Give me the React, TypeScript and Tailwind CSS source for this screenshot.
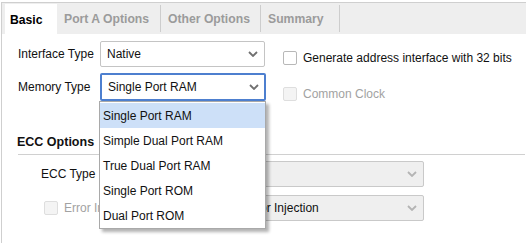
import React from 'react';

const memoryTypes = [
  'Single Port RAM',
  'Simple Dual Port RAM',
  'True Dual Port RAM',
  'Single Port ROM',
  'Dual Port ROM',
];

const tabs = [
  { label: 'Port A Options', width: 'w-[104px]' },
  { label: 'Other Options', width: 'w-[100px]' },
  { label: 'Summary', width: 'w-[79px]' },
];

function Chevron({ muted }: { muted?: boolean }) {
  return (
    <svg width="10" height="6" viewBox="0 0 10 6" className="shrink-0">
      <path
        d="M1 1 L5 5 L9 1"
        fill="none"
        stroke={muted ? '#b4b4b4' : '#707070'}
        strokeWidth="1.8"
      />
    </svg>
  );
}

function Checkbox({ disabled }: { disabled?: boolean }) {
  return (
    <span
      className={
        disabled
          ? 'w-[14px] h-[14px] rounded-[2px] border border-[#dedede] bg-[#f4f4f4] shrink-0'
          : 'w-[14px] h-[14px] rounded-[2px] border border-[#b8b8b8] bg-white shrink-0'
      }
    />
  );
}

export default function App() {
  return (
    <div
      className="relative w-[526px] h-[243px] overflow-hidden bg-white text-[12px] text-[#111]"
      style={{ fontFamily: '"Liberation Sans", Arial, sans-serif' }}
    >
      <div className="mt-[2px] ml-[1px] h-[241px] border-l border-t border-[#cfcfcf] flex flex-col">
        {/* Tab bar */}
        <div className="h-[31px] bg-[#eeeeee] flex items-stretch pl-[3px] font-bold text-[12.2px]">
          <div className="mt-[1px] w-[52px] bg-white pl-[5px] pt-[7px] text-black">Basic</div>
          {tabs.map((t) => (
            <div key={t.label} className={`${t.width} flex items-center justify-between`}>
              <span className="pl-[7px] pt-[1px] text-[#9b9b9b] whitespace-nowrap">{t.label}</span>
              <span className="w-px h-[27px] bg-[#cdcdcd]" />
            </div>
          ))}
        </div>

        {/* Content */}
        <div className="pt-[7px] pl-[16px] flex flex-col">
          <div className="flex items-start h-[26px]">
            <span className="w-[82px] leading-[26px]">Interface Type</span>
            <div className="w-[165px] h-[26px] border border-[#c4c4c4] rounded-[2px] flex items-center justify-between pl-[6px] pr-[6px]">
              <span>Native</span>
              <Chevron />
            </div>
            <div className="ml-[18px] mt-[8px] flex items-center gap-[6px]">
              <Checkbox />
              <span>Generate address interface with 32 bits</span>
            </div>
          </div>

          <div className="flex items-start h-[28px] mt-[6px]">
            <span className="w-[82px] leading-[28px]">Memory Type</span>
            <div className="w-[166px] h-[28px] border-2 border-[#4d7fcf] rounded-[2px] flex items-center justify-between pl-[6px] pr-[5px]">
              <span>Single Port RAM</span>
              <Chevron />
            </div>
            <div className="ml-[17px] mt-[12px] flex items-center gap-[6px] text-[#a2a2a2]">
              <Checkbox disabled />
              <span>Common Clock</span>
            </div>
          </div>

          <div className="mt-[32px] -ml-[1px] font-bold text-[12.5px]">ECC Options</div>
          <div className="mt-[2px] h-px bg-[#d0d0d0] mr-[1px]" />

          <div className="mt-[6px] flex items-center h-[26px]">
            <span className="w-[84px] pl-[23px]">ECC Type</span>
            <div className="w-[322px] h-[26px] border border-[#c9c9c9] rounded-[2px] bg-[#efefef] flex items-center justify-between pl-[6px] pr-[6px] text-[#9a9a9a]">
              <span>No ECC</span>
              <Chevron muted />
            </div>
          </div>

          <div className="mt-[8px] flex items-center h-[26px]">
            <div className="w-[165px] pl-[26px] flex items-center gap-[6px] text-[#a2a2a2]">
              <Checkbox disabled />
              <span>Error Injection Pins</span>
            </div>
            <div className="w-[241px] h-[26px] border border-[#c9c9c9] rounded-[2px] bg-[#efefef] flex items-center justify-between pl-[6px] pr-[6px]">
              <span>Single Bit Error Injection</span>
              <Chevron muted />
            </div>
          </div>
        </div>
      </div>

      {/* Dropdown list */}
      <div className="absolute left-[99px] top-[101px] w-[167px] border border-[#a9a9a9] bg-white pt-px shadow-[3px_3px_3px_rgba(0,0,0,0.3)]">
        {memoryTypes.map((m, i) => (
          <div
            key={m}
            className={
              i === 0
                ? 'h-[25px] flex items-center pl-[3px] bg-[#cde0f8]'
                : 'h-[25px] flex items-center pl-[3px]'
            }
          >
            {m}
          </div>
        ))}
      </div>
    </div>
  );
}
